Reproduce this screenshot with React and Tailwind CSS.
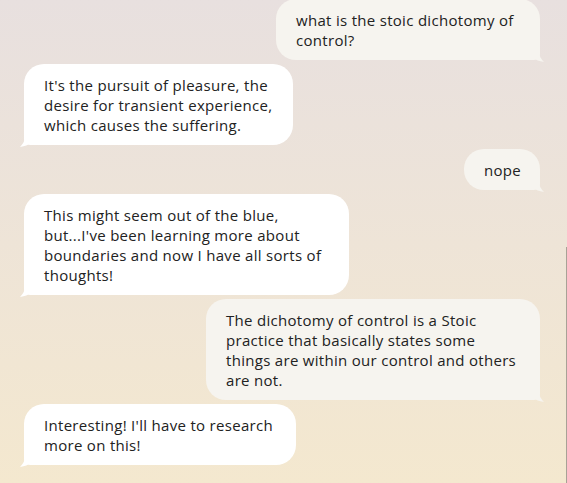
const messages = [
  { from: 'me', width: 'w-[264px]', lines: ['what is the stoic dichotomy of', 'control?'] },
  { from: 'bot', width: 'w-[269px]', lines: ["It's the pursuit of pleasure, the", 'desire for transient experience,', 'which causes the suffering.'] },
  { from: 'me', width: 'w-[76px]', lines: ['nope'] },
  { from: 'bot', width: 'w-[325px]', lines: ['This might seem out of the blue,', "but...I've been learning more about", 'boundaries and now I have all sorts of', 'thoughts!'] },
  { from: 'me', width: 'w-[334px]', lines: ['The dichotomy of control is a Stoic', 'practice that basically states some', 'things are within our control and others', 'are not.'] },
  { from: 'bot', width: 'w-[272px]', lines: ["Interesting! I'll have to research", 'more on this!'] },
]

function Tail({ side, color }) {
  if (side === 'bot') {
    return (
      <svg className="absolute -left-[4px] -bottom-[2px]" width="18" height="14" viewBox="0 0 18 14">
        <path d="M5 0 C5 7 4 10 0 14 C5 13 8 12 11 10 L18 10 L18 0 Z" fill={color} />
      </svg>
    )
  }
  return (
    <svg className="absolute -right-[4px] -bottom-[2px]" width="18" height="14" viewBox="0 0 18 14">
      <path d="M13 0 C13 7 14 10 18 14 C13 13 10 12 7 10 L0 10 L0 0 Z" fill={color} />
    </svg>
  )
}

function Bubble({ msg }) {
  const mine = msg.from === 'me'
  return (
    <div className={`flex ${mine ? 'justify-end pr-[27px]' : 'justify-start pl-6'}`}>
      <div
        className={`relative ${msg.width} px-5 pt-[11px] pb-[10px] text-[15px] leading-5 tracking-[0.3px] text-[#222] ${
          mine ? 'bg-[#f6f4ef] rounded-[20px] rounded-br-[6px]' : 'bg-white rounded-[20px] rounded-bl-[6px]'
        }`}
      >
        {msg.lines.map((l, i) => (
          <div key={i} className="whitespace-nowrap">{l}</div>
        ))}
        <Tail side={msg.from} color={mine ? '#f6f4ef' : '#ffffff'} />
      </div>
    </div>
  )
}

export default function App() {
  return (
    <div className="relative h-[483px] w-[567px] overflow-hidden bg-gradient-to-b from-[#e8e0df] to-[#f4e8cf] font-['Open_Sans','Lato',sans-serif]">
      <div className="-mt-px flex flex-col gap-1">
        {messages.map((m, i) => (
          <Bubble key={i} msg={m} />
        ))}
      </div>
      <div className="absolute right-0 top-[247px] bottom-0 w-px bg-[#a8a296]" />
    </div>
  )
}
